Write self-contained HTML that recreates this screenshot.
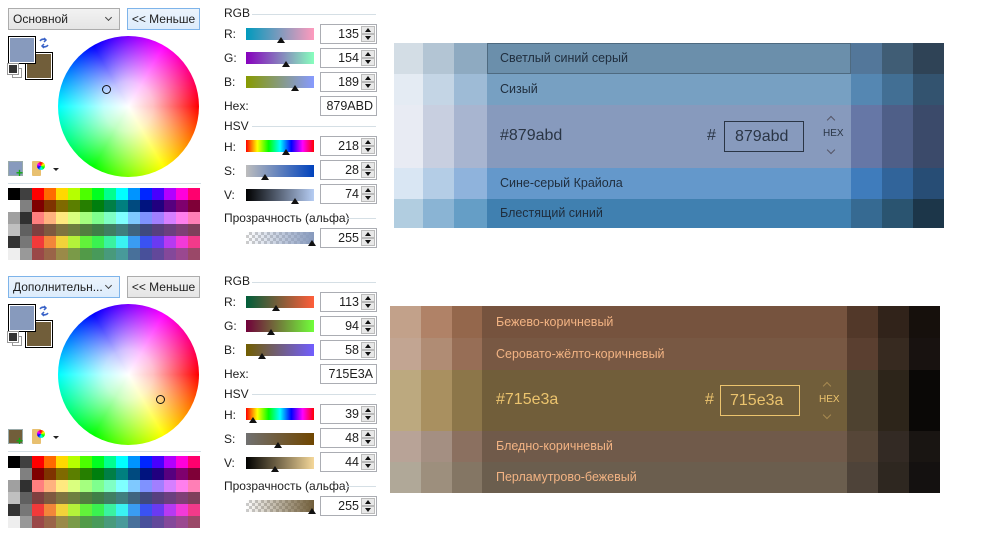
<!DOCTYPE html>
<html><head><meta charset="utf-8"><style>
*{box-sizing:border-box;margin:0;padding:0}
body{width:1000px;height:532px;background:#fff;position:relative;overflow:hidden;font-family:"Liberation Sans","DejaVu Sans",sans-serif;font-size:12px;color:#1e1e1e}
.a{position:absolute}
.p{position:absolute;left:0;width:390px;height:268px}
.dd{left:8px;top:8px;width:112px;height:22px;border:1px solid #acacac;background:linear-gradient(#f2f2f2,#e5e5e5);padding:3px 0 0 4px}
.dd.f{border-color:#7eb4ea;background:linear-gradient(#ecf4fc,#dcecfc)}
.dd:after{content:"";position:absolute;right:8px;top:6px;width:4px;height:4px;border-right:1.5px solid #444;border-bottom:1.5px solid #444;transform:rotate(45deg)}
.bt{left:127px;top:8px;width:73px;height:22px;border:1px solid #acacac;background:linear-gradient(#f2f2f2,#e5e5e5);text-align:center;padding-top:3px}
.bt.f{border-color:#7eb4ea;background:linear-gradient(#ecf4fc,#dcecfc)}
.sw1{left:8px;top:36px;width:28px;height:28px;border:1px solid #000;background:#879abd;box-shadow:inset 0 0 0 1px #fff}
.sw2{left:25px;top:52px;width:28px;height:28px;border:1px solid #000;background:#715e3a;box-shadow:inset 0 0 0 1px #fff}
.wh{left:58px;top:36px;width:141px;height:141px;border-radius:50%;background:conic-gradient(from 0deg,#8000ff,#ff00ff 30deg,#ff0080 60deg,#ff0000 90deg,#ff8000 120deg,#ffff00 150deg,#80ff00 180deg,#00ff00 210deg,#00ff80 240deg,#00ffff 270deg,#0080ff 300deg,#0000ff 330deg,#8000ff 360deg)}
.wh:after{content:"";position:absolute;inset:0;border-radius:50%;background:radial-gradient(circle,#fff 0,rgba(255,255,255,.75) 25%,rgba(255,255,255,0) 70%)}
.mk{width:9px;height:9px;border:1.5px solid #111;border-radius:50%;z-index:2}
.sep{left:8px;top:183px;width:193px;height:1px;background:#d5dfe5}
.pal{left:8px;top:188px;width:192px;height:72px}
.lb{left:224px}
.hl{left:252px;width:124px;height:1px;background:#d5dfe5}
.sl{left:246px;width:68px;height:12px}
.th{width:0;height:0;border-left:4px solid transparent;border-right:4px solid transparent;border-bottom:6px solid #111}
.sp{left:320px;width:57px;height:20px;border:1px solid #abadb3;text-align:right;padding:2px 17px 0 0;font-size:12.5px;background:#fff}
.sp i{position:absolute;right:1px;top:1px;width:14px;height:8px;background:#e8e8e8;border:1px solid #bbb}
.sp b{position:absolute;right:1px;bottom:1px;width:14px;height:8px;background:#e8e8e8;border:1px solid #bbb}
.sp i:after{content:"";position:absolute;left:3px;top:1px;border-left:3px solid transparent;border-right:3px solid transparent;border-bottom:4px solid #111}
.sp b:after{content:"";position:absolute;left:3px;top:1px;border-left:3px solid transparent;border-right:3px solid transparent;border-top:4px solid #111}
.hx{left:320px;width:57px;height:20px;border:1px solid #abadb3;text-align:right;padding:2px 3px 0 0;font-size:12.5px}
.chk{background-color:#fff;background-image:linear-gradient(45deg,#ccc 25%,transparent 25%,transparent 75%,#ccc 75%),linear-gradient(45deg,#ccc 25%,transparent 25%,transparent 75%,#ccc 75%);background-size:6px 6px;background-position:0 0,3px 3px}
.row{position:absolute;left:0;width:100%}
</style></head><body>

<!-- PANEL 1 -->
<div class="p" style="top:0">
 <div class="a dd">Основной</div>
 <div class="a bt f">&lt;&lt; Меньше</div>
 <div class="a sw2"></div><div class="a sw1"></div>
 <svg class="a" style="left:38px;top:37px" width="12" height="12" viewBox="0 0 12 12"><path d="M2 4 Q4 1 8 3 M6 1 L8 3 L6 5 M10 8 Q8 11 4 9 M6 7 L4 9 L6 11" stroke="#3a63c8" stroke-width="1.5" fill="none"/></svg>
 <div class="a" style="left:12px;top:68px;width:10px;height:10px;border:1px solid #999;background:#fff"></div>
 <div class="a" style="left:8px;top:64px;width:10px;height:10px;border:1px solid #fff;background:#333;outline:1px solid #999"></div>
 <div class="a wh"></div>
 <div class="a mk" style="left:102px;top:85px"></div>
 <div class="a" style="left:8px;top:161px;width:15px;height:15px;background:#879abd;border:1px solid #9aa"></div>
 <div class="a" style="left:16px;top:168px;color:#1a1;font-weight:bold;font-size:12px;line-height:10px">+</div>
 <div class="a" style="left:32px;top:161px;width:9px;height:15px;background:#e8c070;border-radius:1px"></div>
 <div class="a" style="left:37px;top:162px;width:8px;height:8px;border-radius:50%;background:conic-gradient(red,yellow,lime,cyan,blue,magenta,red)"></div>
 <div class="a" style="left:53px;top:168px;border-left:3px solid transparent;border-right:3px solid transparent;border-top:3px solid #222"></div>
 <div class="a sep"></div>
 <div class="a pal"></div>

 <div class="a lb" style="top:6px">RGB</div><div class="a hl" style="top:14px"></div>
 <div class="a lb" style="top:27px">R:</div>
 <div class="a sl" style="top:28px;background:linear-gradient(90deg,rgb(0,154,189),rgb(255,154,189))"></div>
 <div class="a th" style="left:277px;top:37px"></div>
 <div class="a sp" style="top:24px">135<i></i><b></b></div>
 <div class="a lb" style="top:51px">G:</div>
 <div class="a sl" style="top:52px;background:linear-gradient(90deg,rgb(135,0,189),rgb(135,255,189))"></div>
 <div class="a th" style="left:282px;top:61px"></div>
 <div class="a sp" style="top:48px">154<i></i><b></b></div>
 <div class="a lb" style="top:75px">B:</div>
 <div class="a sl" style="top:76px;background:linear-gradient(90deg,rgb(135,154,0),rgb(135,154,255))"></div>
 <div class="a th" style="left:291px;top:85px"></div>
 <div class="a sp" style="top:72px">189<i></i><b></b></div>
 <div class="a lb" style="top:99px">Hex:</div>
 <div class="a hx" style="top:96px">879ABD</div>
 <div class="a lb" style="top:119px">HSV</div><div class="a hl" style="top:126px"></div>
 <div class="a lb" style="top:140px">H:</div>
 <div class="a sl" style="top:140px;background:linear-gradient(90deg,red,yellow,lime,cyan,blue,magenta,red)"></div>
 <div class="a th" style="left:282px;top:149px"></div>
 <div class="a sp" style="top:136px">218<i></i><b></b></div>
 <div class="a lb" style="top:164px">S:</div>
 <div class="a sl" style="top:165px;background:linear-gradient(90deg,#bdbdbd,#0042bd)"></div>
 <div class="a th" style="left:261px;top:174px"></div>
 <div class="a sp" style="top:160px">28<i></i><b></b></div>
 <div class="a lb" style="top:188px">V:</div>
 <div class="a sl" style="top:189px;background:linear-gradient(90deg,#000,#b6cdf4)"></div>
 <div class="a th" style="left:291px;top:198px"></div>
 <div class="a sp" style="top:184px">74<i></i><b></b></div>
 <div class="a lb" style="top:211px">Прозрачность (альфа)</div><div class="a hl" style="left:346px;width:30px;top:218px"></div>
 <div class="a sl chk" style="top:232px"><div style="position:absolute;inset:0;background:linear-gradient(90deg,rgba(135,154,189,0),#879abd)"></div></div>
 <div class="a th" style="left:308px;top:240px"></div>
 <div class="a sp" style="top:228px">255<i></i><b></b></div>
</div>

<!-- PANEL 2 -->
<div class="p" style="top:268px">
 <div class="a dd f">Дополнительн...</div>
 <div class="a bt">&lt;&lt; Меньше</div>
 <div class="a sw2"></div><div class="a sw1"></div>
 <svg class="a" style="left:38px;top:37px" width="12" height="12" viewBox="0 0 12 12"><path d="M2 4 Q4 1 8 3 M6 1 L8 3 L6 5 M10 8 Q8 11 4 9 M6 7 L4 9 L6 11" stroke="#3a63c8" stroke-width="1.5" fill="none"/></svg>
 <div class="a" style="left:12px;top:68px;width:10px;height:10px;border:1px solid #999;background:#fff"></div>
 <div class="a" style="left:8px;top:64px;width:10px;height:10px;border:1px solid #fff;background:#333;outline:1px solid #999"></div>
 <div class="a wh"></div>
 <div class="a mk" style="left:156px;top:127px"></div>
 <div class="a" style="left:8px;top:161px;width:15px;height:15px;background:#715e3a;border:1px solid #9aa"></div>
 <div class="a" style="left:16px;top:168px;color:#1a1;font-weight:bold;font-size:12px;line-height:10px">+</div>
 <div class="a" style="left:32px;top:161px;width:9px;height:15px;background:#e8c070;border-radius:1px"></div>
 <div class="a" style="left:37px;top:162px;width:8px;height:8px;border-radius:50%;background:conic-gradient(red,yellow,lime,cyan,blue,magenta,red)"></div>
 <div class="a" style="left:53px;top:168px;border-left:3px solid transparent;border-right:3px solid transparent;border-top:3px solid #222"></div>
 <div class="a sep"></div>
 <div class="a pal"></div>

 <div class="a lb" style="top:6px">RGB</div><div class="a hl" style="top:14px"></div>
 <div class="a lb" style="top:27px">R:</div>
 <div class="a sl" style="top:28px;background:linear-gradient(90deg,rgb(0,94,58),rgb(255,94,58))"></div>
 <div class="a th" style="left:272px;top:37px"></div>
 <div class="a sp" style="top:24px">113<i></i><b></b></div>
 <div class="a lb" style="top:51px">G:</div>
 <div class="a sl" style="top:52px;background:linear-gradient(90deg,rgb(113,0,58),rgb(113,255,58))"></div>
 <div class="a th" style="left:267px;top:61px"></div>
 <div class="a sp" style="top:48px">94<i></i><b></b></div>
 <div class="a lb" style="top:75px">B:</div>
 <div class="a sl" style="top:76px;background:linear-gradient(90deg,rgb(113,94,0),rgb(113,94,255))"></div>
 <div class="a th" style="left:258px;top:85px"></div>
 <div class="a sp" style="top:72px">58<i></i><b></b></div>
 <div class="a lb" style="top:99px">Hex:</div>
 <div class="a hx" style="top:96px">715E3A</div>
 <div class="a lb" style="top:119px">HSV</div><div class="a hl" style="top:126px"></div>
 <div class="a lb" style="top:140px">H:</div>
 <div class="a sl" style="top:140px;background:linear-gradient(90deg,red,yellow,lime,cyan,blue,magenta,red)"></div>
 <div class="a th" style="left:249px;top:149px"></div>
 <div class="a sp" style="top:136px">39<i></i><b></b></div>
 <div class="a lb" style="top:164px">S:</div>
 <div class="a sl" style="top:165px;background:linear-gradient(90deg,#707070,#704600)"></div>
 <div class="a th" style="left:274px;top:174px"></div>
 <div class="a sp" style="top:160px">48<i></i><b></b></div>
 <div class="a lb" style="top:188px">V:</div>
 <div class="a sl" style="top:189px;background:linear-gradient(90deg,#000,#f5d89a)"></div>
 <div class="a th" style="left:271px;top:198px"></div>
 <div class="a sp" style="top:184px">44<i></i><b></b></div>
 <div class="a lb" style="top:211px">Прозрачность (альфа)</div><div class="a hl" style="left:346px;width:30px;top:218px"></div>
 <div class="a sl chk" style="top:232px"><div style="position:absolute;inset:0;background:linear-gradient(90deg,rgba(113,94,58,0),#715e3a)"></div></div>
 <div class="a th" style="left:308px;top:240px"></div>
 <div class="a sp" style="top:228px">255<i></i><b></b></div>
</div>

<style>
.pal{background:
linear-gradient(90deg,#000 0 12px,#404040 12px 24px,#ff0000 24px 36px,#ff6a00 36px 48px,#ffd800 48px 60px,#b6ff00 60px 72px,#4cff00 72px 84px,#00ff21 84px 96px,#00ff90 96px 108px,#00ffff 108px 120px,#0094ff 120px 132px,#0026ff 132px 144px,#4800ff 144px 156px,#b200ff 156px 168px,#ff00dc 168px 180px,#ff006e 180px 192px) 0 0/192px 12px no-repeat,
linear-gradient(90deg,#fff 0 12px,#808080 12px 24px,#7f0000 24px 36px,#7f3300 36px 48px,#7f6a00 48px 60px,#5b7f00 60px 72px,#267f00 72px 84px,#007f0e 84px 96px,#007f46 96px 108px,#007f7f 108px 120px,#004a7f 120px 132px,#00137f 132px 144px,#21007f 144px 156px,#57007f 156px 168px,#7f006e 168px 180px,#7f0037 180px 192px) 0 12px/192px 12px no-repeat,
linear-gradient(90deg,#a0a0a0 0 12px,#303030 12px 24px,#ff7f7f 24px 36px,#ffb27f 36px 48px,#ffe97f 48px 60px,#daff7f 60px 72px,#a5ff7f 72px 84px,#7fff8e 84px 96px,#7fffc5 96px 108px,#7fffff 108px 120px,#7fc9ff 120px 132px,#7f92ff 132px 144px,#a17fff 144px 156px,#d67fff 156px 168px,#ff7fed 168px 180px,#ff7fb6 180px 192px) 0 24px/192px 12px no-repeat,
linear-gradient(90deg,#c0c0c0 0 12px,#606060 12px 24px,#7f3f3f 24px 36px,#7f593f 36px 48px,#7f743f 48px 60px,#6d7f3f 60px 72px,#527f3f 72px 84px,#3f7f47 84px 96px,#3f7f62 96px 108px,#3f7f7f 108px 120px,#3f647f 120px 132px,#3f497f 132px 144px,#573f7f 144px 156px,#6b3f7f 156px 168px,#7f3f76 168px 180px,#7f3f5b 180px 192px) 0 36px/192px 12px no-repeat,
linear-gradient(90deg,#333 0 12px,#777 12px 24px,#f23a3a 24px 36px,#f2863a 36px 48px,#f2d23a 48px 60px,#b4f23a 60px 72px,#62f23a 72px 84px,#3af250 84px 96px,#3af2a0 96px 108px,#3af2f2 108px 120px,#3a9cf2 120px 132px,#3a52f2 132px 144px,#6a3af2 144px 156px,#b63af2 156px 168px,#f23ad8 168px 180px,#f23a8a 180px 192px) 0 48px/192px 12px no-repeat,
linear-gradient(90deg,#eee 0 12px,#999 12px 24px,#9a4848 24px 36px,#9a6448 36px 48px,#9a8a48 48px 60px,#7a9a48 60px 72px,#529a48 72px 84px,#489a5a 84px 96px,#489a7c 96px 108px,#489a9a 108px 120px,#48709a 120px 132px,#48509a 132px 144px,#62489a 144px 156px,#84489a 156px 168px,#9a4890 168px 180px,#9a4868 180px 192px) 0 60px/192px 12px no-repeat}
</style>

<!-- SWATCH 1 -->
<div class="a" style="left:394px;top:43px;width:550px;height:185px;font-size:12.5px;color:#1f2d3d">
 <div class="row" style="top:0;height:31px;background:linear-gradient(90deg,#d3dde5 0 29px,#b3c5d4 29px 60px,#8eaac1 60px 93px,#6b8fab 93px 457px,#53779a 457px 488px,#405d75 488px 519px,#2f4356 519px)"></div>
 <div class="a" style="left:93px;top:0;width:364px;height:31px;border:1px solid #4e6a80"></div>
 <div class="a" style="left:106px;top:8px">Светлый синий серый</div>
 <div class="row" style="top:31px;height:31px;background:linear-gradient(90deg,#e4ebf3 0 29px,#c4d5e5 29px 60px,#9ebbd6 60px 93px,#77a0c2 93px 457px,#5587b2 457px 488px,#426f94 488px 519px,#33536f 519px)"><div class="a" style="left:106px;top:8px">Сизый</div></div>
 <div class="row" style="top:62px;height:63px;background:linear-gradient(90deg,#e8ebf3 0 29px,#c8cfe0 29px 60px,#a8b5d0 60px 93px,#879abd 93px 457px,#6677a6 457px 488px,#4f5f88 488px 519px,#3b4a6a 519px)">
  <div class="a" style="left:106px;top:22px;font-size:16px;color:#2a3545">#879abd</div>
  <div class="a" style="left:313px;top:22px;font-size:16px;color:#2a3545">#</div>
  <div class="a" style="left:330px;top:16px;width:80px;height:31px;border:1px solid #2a3545;font-size:16px;padding:6px 0 0 10px;color:#2a3545">879abd</div>
  <div class="a" style="left:429px;top:23px;font-size:10px;color:#2a3545">HEX</div>
  <div class="a" style="left:434px;top:12px;width:6px;height:6px;border-left:1px solid #556;border-top:1px solid #556;transform:rotate(45deg)"></div>
  <div class="a" style="left:434px;top:42px;width:6px;height:6px;border-right:1px solid #556;border-bottom:1px solid #556;transform:rotate(45deg)"></div>
 </div>
 <div class="row" style="top:125px;height:31px;background:linear-gradient(90deg,#d9e6f3 0 29px,#b4cde6 29px 60px,#8fb3dc 60px 93px,#6498cb 93px 457px,#3f7cbc 457px 488px,#31649a 488px 519px,#274d75 519px)"><div class="a" style="left:106px;top:8px">Сине-серый Крайола</div></div>
 <div class="row" style="top:156px;height:29px;background:linear-gradient(90deg,#b1cde0 0 29px,#8ab4d4 29px 60px,#659ec6 60px 93px,#4080b0 93px 457px,#366a92 457px 488px,#2a5470 488px 519px,#1c3649 519px)"><div class="a" style="left:106px;top:7px">Блестящий синий</div></div>
</div>

<!-- SWATCH 2 -->
<div class="a" style="left:390px;top:306px;width:550px;height:187px;font-size:12.5px;color:#f2b383">
 <div class="row" style="top:0;height:32px;background:linear-gradient(90deg,#c2a18a 0 31px,#b08267 31px 62px,#94674c 62px 92px,#76533e 92px 457px,#523829 457px 488px,#31231a 488px 519px,#16100c 519px)"><div class="a" style="left:106px;top:9px">Бежево-коричневый</div></div>
 <div class="row" style="top:32px;height:32px;background:linear-gradient(90deg,#c2a592 0 31px,#b08c74 31px 62px,#976e56 62px 92px,#785843 92px 457px,#5a3f30 457px 488px,#372a20 488px 519px,#181210 519px)"><div class="a" style="left:106px;top:9px">Серовато-жёлто-коричневый</div></div>
 <div class="row" style="top:64px;height:61px;background:linear-gradient(90deg,#bca97f 0 31px,#a99060 31px 62px,#8c7649 62px 92px,#715e3a 92px 457px,#4e4230 457px 488px,#2d251a 488px 519px,#0a0806 519px);color:#ecc46e">
  <div class="a" style="left:106px;top:21px;font-size:16px">#715e3a</div>
  <div class="a" style="left:315px;top:21px;font-size:16px">#</div>
  <div class="a" style="left:330px;top:15px;width:80px;height:31px;border:1px solid #ecc46e;font-size:16px;padding:6px 0 0 9px">715e3a</div>
  <div class="a" style="left:429px;top:24px;font-size:10px">HEX</div>
  <div class="a" style="left:434px;top:13px;width:6px;height:6px;border-left:1px solid #a88a50;border-top:1px solid #a88a50;transform:rotate(45deg)"></div>
  <div class="a" style="left:434px;top:42px;width:6px;height:6px;border-right:1px solid #a88a50;border-bottom:1px solid #a88a50;transform:rotate(45deg)"></div>
 </div>
 <div class="row" style="top:125px;height:31px;background:linear-gradient(90deg,#b8a397 0 31px,#a48f82 31px 62px,#8b7060 62px 92px,#705a4a 92px 457px,#564638 457px 488px,#332a24 488px 519px,#191512 519px)"><div class="a" style="left:106px;top:8px">Бледно-коричневый</div></div>
 <div class="row" style="top:156px;height:31px;background:linear-gradient(90deg,#b0a898 0 31px,#9d8f7d 31px 62px,#847664 62px 92px,#6b5e4e 92px 457px,#4e4339 457px 488px,#2e2720 488px 519px,#141110 519px)"><div class="a" style="left:106px;top:8px">Перламутрово-бежевый</div></div>
</div>
</body></html>
